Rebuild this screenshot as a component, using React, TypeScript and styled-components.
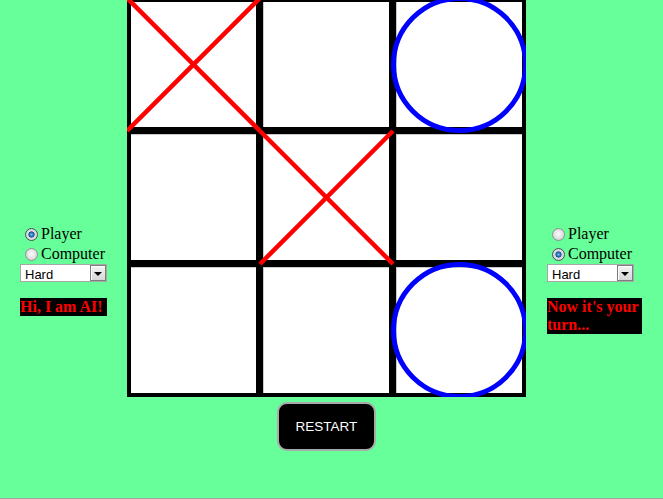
import React, { useState } from 'react';
import styled, { createGlobalStyle } from 'styled-components';

type Mark = 'X' | 'O' | null;

const GlobalStyle = createGlobalStyle`
  html, body {
    margin: 0;
    padding: 0;
    overflow: hidden;
  }
  body {
    font-family: "Liberation Serif", "Times New Roman", serif;
    font-size: 16px;
  }
`;

const Page = styled('div')`
  box-sizing: border-box;
  height: 100vh;
  background-color: #66ff99;
  border-bottom: 1px solid #a3a3a3;
  display: flex;
  align-items: flex-start;
  gap: 20px;
  padding-left: 20px;
  overflow: hidden;
`;

const Side = styled('div')<{ $width: number; $shift?: number }>`
  width: ${(p) => p.$width}px;
  margin-left: ${(p) => p.$shift ?? 0}px;
  flex-shrink: 0;
  padding-top: 224px;
  display: flex;
  flex-direction: column;
`;

const RadioRow = styled('label')`
  display: flex;
  align-items: center;
  height: 20px;
  color: #000;
  white-space: nowrap;
`;

const Radio = styled('input')`
  appearance: none;
  box-sizing: border-box;
  width: 13px;
  height: 13px;
  margin: 0 3px 0 5px;
  border-radius: 50%;
  border: 1px solid #8f9091;
  background: radial-gradient(circle at 50% 45%, #fbfbfb 0%, #e6e6e6 45%, #c4c4c4 100%);

  &:checked {
    border-color: #4d5257;
    background: radial-gradient(
      circle at 50% 50%,
      #7fc2f2 0%,
      #2c78c0 22%,
      #174e86 36%,
      #dfe2e5 44%,
      #c3c6c9 100%
    );
  }
`;

const SelectBox = styled('div')`
  position: relative;
  box-sizing: border-box;
  width: 87px;
  height: 18px;
  border: 1px solid #a7a7a7;
  background: #fff;
`;

const Select = styled('select')`
  appearance: none;
  border: none;
  outline: none;
  margin: 0;
  width: 100%;
  height: 100%;
  padding: 0 0 0 4px;
  background: transparent;
  font-family: "Liberation Sans", Arial, sans-serif;
  font-size: 13px;
  color: #000;
`;

const DropButton = styled('span')`
  position: absolute;
  top: 0;
  right: 0;
  bottom: 0;
  width: 16px;
  box-sizing: border-box;
  border: 1px solid #7d7d7d;
  box-shadow: inset 1px 1px 0 #fff;
  background: linear-gradient(#f4f4f4, #d6d6d6);
  pointer-events: none;
  display: flex;
  align-items: center;
  justify-content: center;

  &::after {
    content: '';
    border-left: 4px solid transparent;
    border-right: 4px solid transparent;
    border-top: 4px solid #000;
    margin-top: 1px;
  }
`;

const Message = styled('p')`
  margin: 16px 0 0;
  background: #000;
  color: #ff0000;
  font-weight: bold;
  font-size: 16px;
  line-height: 18px;
`;

const Center = styled('div')`
  display: flex;
  flex-direction: column;
  align-items: center;
  margin-top: -2px;
  flex-shrink: 0;
`;

const Board = styled('div')`
  display: grid;
  grid-template-columns: repeat(3, 133px);
  grid-auto-rows: 133px;
  background: #000;
  overflow: hidden;
`;

const Cell = styled('div')`
  position: relative;
  cursor: pointer;
`;

const Face = styled('div')<{ $row: number; $col: number }>`
  position: absolute;
  top: ${(p) => (p.$row === 0 ? 4 : 3)}px;
  left: ${(p) => (p.$col === 0 ? 4 : 3)}px;
  bottom: 4px;
  right: 4px;
  background: #fff;
  box-shadow: ${(p) =>
    [p.$col > 0 ? 'inset 1px 0 0 #c9c9c9' : '', p.$row > 0 ? 'inset 0 1px 0 #c9c9c9' : '']
      .filter(Boolean)
      .join(', ') || 'none'};
`;

const MarkSvg = styled('svg')`
  position: absolute;
  inset: 0;
  width: 133px;
  height: 133px;
  overflow: visible;
`;

const RestartButton = styled('button')`
  margin-top: 5px;
  width: 99px;
  height: 49px;
  box-sizing: border-box;
  border: 2px solid #a9a9a9;
  border-radius: 10px;
  background: #000;
  color: #fff;
  font-family: "Liberation Sans", Arial, sans-serif;
  font-size: 13.5px;
  cursor: pointer;
`;

function CellMark({ mark }: { mark: Mark }) {
  if (mark === 'X') {
    return (
      <MarkSvg viewBox="0 0 133 133">
        <line x1="0" y1="0" x2="133" y2="133" stroke="#ff0000" strokeWidth="4.5" />
        <line x1="0" y1="133" x2="133" y2="0" stroke="#ff0000" strokeWidth="4.5" />
      </MarkSvg>
    );
  }
  if (mark === 'O') {
    return (
      <MarkSvg viewBox="0 0 133 133">
        <circle cx="66.5" cy="66.5" r="66" fill="none" stroke="#0000ff" strokeWidth="5" />
      </MarkSvg>
    );
  }
  return null;
}

function PlayerPanel({
  name,
  mode,
  width,
  shift,
  message,
}: {
  name: string;
  mode: 'player' | 'computer';
  width: number;
  shift?: number;
  message: string;
}) {
  const [value, setValue] = useState(mode);
  return (
    <Side $width={width} $shift={shift}>
      <RadioRow>
        <Radio
          type="radio"
          name={name}
          checked={value === 'player'}
          onChange={() => setValue('player')}
        />
        Player
      </RadioRow>
      <RadioRow>
        <Radio
          type="radio"
          name={name}
          checked={value === 'computer'}
          onChange={() => setValue('computer')}
        />
        Computer
      </RadioRow>
      <SelectBox>
        <Select defaultValue="hard">
          <option value="easy">Easy</option>
          <option value="medium">Medium</option>
          <option value="hard">Hard</option>
        </Select>
        <DropButton />
      </SelectBox>
      <Message>{message}</Message>
    </Side>
  );
}

const initialBoard: Mark[] = ['X', null, 'O', null, 'X', null, null, null, 'O'];

export default function App() {
  const [cells, setCells] = useState<Mark[]>(initialBoard);

  return (
    <>
      <GlobalStyle />
      <Page>
        <PlayerPanel name="p1" mode="player" width={87} message="Hi, I am AI!" />
        <Center>
          <Board>
            {cells.map((mark, i) => (
              // eslint-disable-next-line react/no-array-index-key
              <Cell key={i}>
                <Face $row={Math.floor(i / 3)} $col={i % 3} />
                <CellMark mark={mark} />
              </Cell>
            ))}
          </Board>
          <RestartButton type="button" onClick={() => setCells(Array(9).fill(null))}>
            RESTART
          </RestartButton>
        </Center>
        <PlayerPanel name="p2" mode="computer" width={95} shift={1} message="Now it's your turn..." />
      </Page>
    </>
  );
}
